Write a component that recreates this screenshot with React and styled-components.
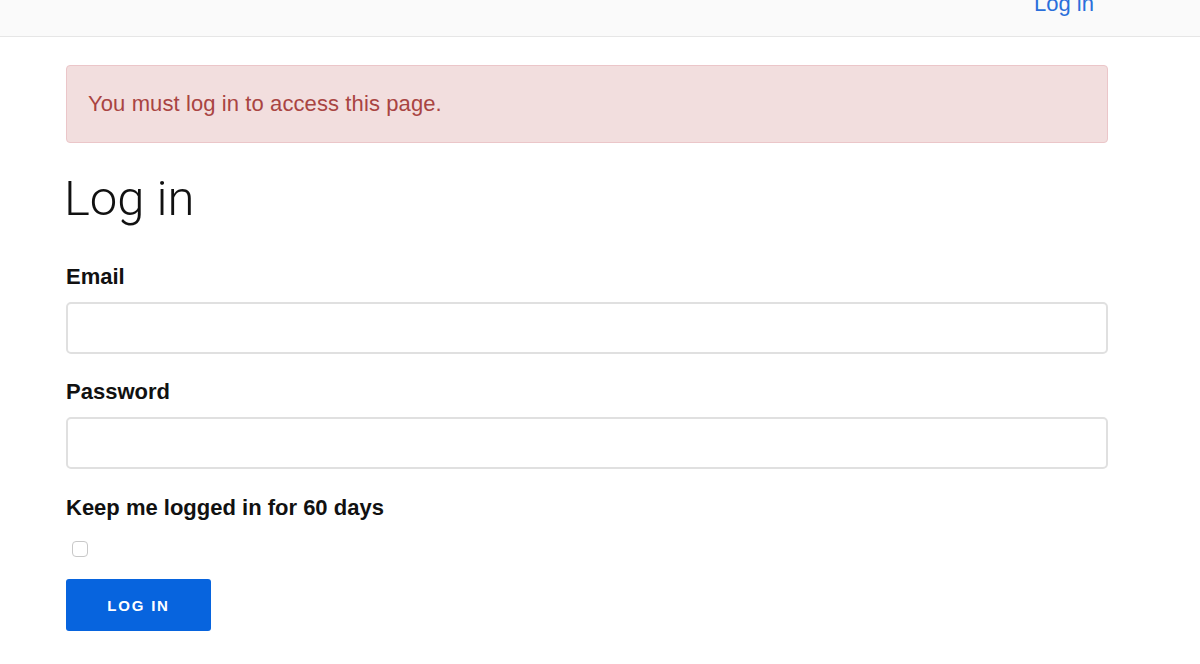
import React from "react";
import styled, { createGlobalStyle } from "styled-components";

const GlobalStyle = createGlobalStyle`
    html, body {
        margin: 0;
        padding: 0;
        background: #fff;
        font-family: "Liberation Sans", Arial, sans-serif;
        color: #111;
    }
`;

const TopBar = styled.header`
    height: 36px;
    background: #fafafa;
    border-bottom: 1px solid #e6e6e6;
    display: flex;
    justify-content: flex-end;
    align-items: flex-start;
    padding-right: 106px;
    overflow: hidden;
`;

const NavLink = styled.a`
    color: #2a6fdb;
    font-size: 22px;
    line-height: 22px;
    margin-top: -7px;
    text-decoration: none;
    cursor: pointer;
`;

const Page = styled.main`
    width: 1042px;
    margin: 0 0 0 66px;
    padding-top: 28px;
`;

const Alert = styled.div`
    background: #f2dede;
    border: 1px solid #ebc6c9;
    border-radius: 4px;
    color: #a94442;
    font-size: 22px;
    letter-spacing: 0.1px;
    height: 76px;
    padding: 0 21px;
    display: flex;
    align-items: center;
`;

const Title = styled.h1`
    font-family: "Roboto", "Liberation Sans", sans-serif;
    font-weight: 300;
    font-size: 49px;
    line-height: 56px;
    margin: 28px 0 0 -2px;
    color: #111;
`;

const Field = styled.div`
    display: flex;
    flex-direction: column;
    margin-top: ${(props) => props.$top || 0}px;
`;

const Label = styled.label`
    font-weight: bold;
    font-size: 22px;
    line-height: 26px;
    color: #111;
`;

const Input = styled.input`
    box-sizing: border-box;
    height: 52px;
    width: 100%;
    margin-top: 12px;
    border: 2px solid #e0e0e0;
    border-radius: 5px;
    background: #fff;
    font-size: 18px;
    padding: 0 12px;
    outline: none;
`;

const Check = styled.input`
    width: 16px;
    height: 16px;
    margin: 20px 0 0 6px;
    appearance: none;
    border: 1.5px solid #c8c8c8;
    border-radius: 4px;
    background: #fff;
`;

const SubmitButton = styled.button`
    margin-top: 22px;
    width: 145px;
    height: 52px;
    border: none;
    border-radius: 3px;
    background: #0764de;
    color: #fff;
    font-family: "Liberation Sans", Arial, sans-serif;
    font-weight: bold;
    font-size: 15px;
    letter-spacing: 1.8px;
    cursor: pointer;
`;

function App() {
    return (
        <>
            <GlobalStyle />
            <TopBar>
                <NavLink>Log in</NavLink>
            </TopBar>
            <Page>
                <Alert>You must log in to access this page.</Alert>
                <Title>Log in</Title>
                <Field $top={37}>
                    <Label htmlFor="email">Email</Label>
                    <Input id="email" type="email" />
                </Field>
                <Field $top={25}>
                    <Label htmlFor="password">Password</Label>
                    <Input id="password" type="password" />
                </Field>
                <Field $top={26}>
                    <Label htmlFor="remember">Keep me logged in for 60 days</Label>
                    <Check id="remember" type="checkbox" />
                </Field>
                <SubmitButton>LOG IN</SubmitButton>
            </Page>
        </>
    );
}

export default App;
